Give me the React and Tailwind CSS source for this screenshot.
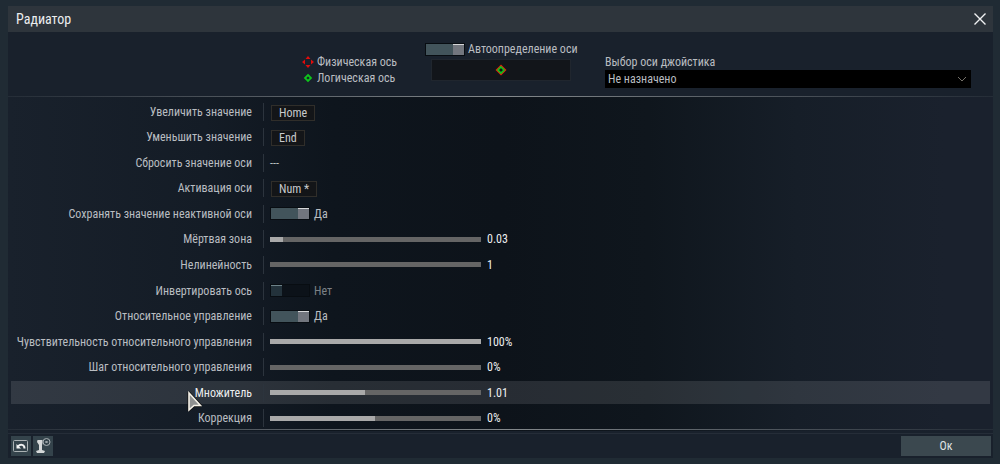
import React, { useState } from 'react';

const ROWS = [
  { id: 'inc', label: 'Увеличить значение', type: 'key', value: 'Home' },
  { id: 'dec', label: 'Уменьшить значение', type: 'key', value: 'End' },
  { id: 'reset', label: 'Сбросить значение оси', type: 'empty', value: '---' },
  { id: 'activate', label: 'Активация оси', type: 'key', value: 'Num *' },
  { id: 'keep', label: 'Сохранять значение неактивной оси', type: 'toggle', value: true },
  { id: 'dead', label: 'Мёртвая зона', type: 'slider', value: 6, text: '0.03' },
  { id: 'nonlin', label: 'Нелинейность', type: 'slider', value: 0, text: '1' },
  { id: 'invert', label: 'Инвертировать ось', type: 'toggle', value: false },
  { id: 'relative', label: 'Относительное управление', type: 'toggle', value: true },
  { id: 'sens', label: 'Чувствительность относительного управления', type: 'slider', value: 100, text: '100%' },
  { id: 'step', label: 'Шаг относительного управления', type: 'slider', value: 0, text: '0%' },
  { id: 'mult', label: 'Множитель', type: 'slider', value: 45, text: '1.01', active: true },
  { id: 'corr', label: 'Коррекция', type: 'slider', value: 50, text: '0%' },
];

function Toggle({ id, checked, onChange }) {
  return (
    <input
      id={id}
      type="checkbox"
      checked={checked}
      onChange={onChange}
      className="flex h-[13px] w-10 shrink-0 appearance-none border border-[#080d12] bg-[#0c1219] before:block before:h-full before:w-[11px] before:border-t before:border-[#6d8289] before:bg-[#23323b] before:content-[''] checked:justify-end checked:bg-[#42545b] checked:before:border-[#d5d7d9] checked:before:bg-[#72767e]"
    />
  );
}

function Slider({ id, value, onChange }) {
  return (
    <input
      id={id}
      type="range"
      min="0"
      max="100"
      value={value}
      onChange={onChange}
      className="h-[5px] w-[211px] shrink-0 appearance-none [&::-webkit-slider-thumb]:h-0 [&::-webkit-slider-thumb]:w-0 [&::-webkit-slider-thumb]:appearance-none"
      style={{ background: `linear-gradient(to right, #a9a9a9 ${value}%, #656565 ${value}%)` }}
    />
  );
}

function PhysicalMark() {
  return (
    <svg className="size-3" viewBox="0 0 12 12" fill="#e00c0c" aria-hidden="true">
      <path d="M6 0 8.5 3h-5zM6 12 3.5 9h5zM0 6 3 3.5v5zM12 6 9 8.5v-5z" />
    </svg>
  );
}

function LogicalMark() {
  return (
    <svg className="size-3" viewBox="0 0 12 12" fill="none" stroke="#0ec41c" strokeWidth="1.8" aria-hidden="true">
      <path d="M6 3 9 6 6 9 3 6z" />
    </svg>
  );
}

function Pointer() {
  return (
    <svg className="absolute -left-2 top-1.5 z-10 h-[21px] w-[15px]" viewBox="0 0 15 21" aria-hidden="true">
      <path d="M2 2v17l5-4.500 6.500 0z" fill="#111" stroke="#111" strokeWidth="3" strokeLinejoin="round" />
      <path d="M2 2v17l5-4.500 6.500 0z" fill="#8f9191" stroke="#f4f1e8" strokeWidth="1.600" />
    </svg>
  );
}

function Row({ row }) {
  const [value, setValue] = useState(row.value);

  return (
    <div className="flex items-center">
      <div className={`flex h-[23px] flex-1 items-center ${row.active ? 'bg-[#ffffff1c]' : ''}`}>
        <div className="flex w-[241px] shrink-0 justify-end whitespace-nowrap">
          <label htmlFor={row.id} className={`relative ${row.active ? 'text-[#eceeef]' : ''}`}>
            {row.label}
            {row.active && <Pointer />}
          </label>
        </div>
        <div className="ml-[11px] mr-1.5 h-[18px] w-px bg-[#2c343d]" />

        {row.type === 'key' && (
          <button id={row.id} className="ml-px mt-0.5 h-4 border border-[#302e2a] bg-[#131518] px-[7px] leading-[14px] text-[#c8cacc]">
            {row.value}
          </button>
        )}
        {row.type === 'empty' && <button id={row.id}>{row.value}</button>}
        {row.type === 'toggle' && (
          <>
            <Toggle id={row.id} checked={value} onChange={(e) => setValue(e.target.checked)} />
            <span className={`ml-1 ${value ? '' : 'text-[#7c8186]'}`}>{value ? 'Да' : 'Нет'}</span>
          </>
        )}
        {row.type === 'slider' && (
          <>
            <Slider id={row.id} value={value} onChange={(e) => setValue(Number(e.target.value))} />
            <span className="ml-1.5 text-[#eceeef]">{row.text}</span>
          </>
        )}
      </div>
    </div>
  );
}

export default function App() {
  const [auto, setAuto] = useState(true);

  return (
    <div className="flex min-h-screen flex-col bg-[#202b34] py-1.5 pl-2 pr-[7px] font-['Roboto_Condensed','Open_Sans_Condensed_Light',sans-serif] text-[12px] leading-4 text-[#b9bdc1]">
      <main className="flex flex-1 flex-col bg-[#19212c]">
        <header className="flex h-[26px] items-center justify-between bg-[#2e353c] px-2">
          <h1 className="text-[14px] text-[#eceeef]">Радиатор</h1>
          <button aria-label="Закрыть" className="-mr-[3px]">
            <svg className="size-4" viewBox="0 0 16 16" fill="none" stroke="#f0f2f3" strokeWidth="1.4">
              <path d="M2.500 2.500 13.500 13.500M13.500 2.500 2.500 13.500" />
            </svg>
          </button>
        </header>

        <section className="grid h-16 grid-cols-[1fr_152px_366px] gap-x-7 pr-[22px]">
          <ul className="justify-self-end pt-[22px]">
            <li className="flex items-center gap-[3px]"><PhysicalMark />Физическая ось</li>
            <li className="flex items-center gap-[3px]"><LogicalMark />Логическая ось</li>
          </ul>
          <div className="pt-[9px]">
            <div className="flex items-center gap-[3px] whitespace-nowrap">
              <Toggle id="auto" checked={auto} onChange={(e) => setAuto(e.target.checked)} />
              <label htmlFor="auto">Автоопределение оси</label>
            </div>
            <div className="mx-1.5 mt-0.5 flex h-[22px] items-center justify-center border border-[#20262e] bg-[#12151a]">
              <svg className="size-3" viewBox="0 0 12 12" aria-hidden="true">
                <path d="M6 0.500 11.500 6 6 11.500 0.500 6z" fill="#e0240c" />
                <path d="M6 3 9 6 6 9 3 6z" fill="#12151a" stroke="#0ec41c" strokeWidth="1.600" />
              </svg>
            </div>
          </div>
          <div className="flex flex-col pt-[22px]">
            <label htmlFor="axis">Выбор оси джойстика</label>
            <div className="grid items-center">
              <select id="axis" className="col-start-1 row-start-1 h-[18px] appearance-none bg-black px-[3px] text-[#b9bdc1]">
                <option>Не назначено</option>
              </select>
              <svg className="pointer-events-none col-start-1 row-start-1 mr-1 size-2.5 justify-self-end" viewBox="0 0 10 10" fill="none" stroke="#74716a">
                <path d="M1 3 5 7 9 3" />
              </svg>
            </div>
          </div>
        </section>

        <div className="h-px bg-linear-to-r from-[#252d37] via-[#858a8d] to-[#252d37]" />

        <section className="grid flex-1 auto-rows-fr bg-[linear-gradient(to_right,#19212c,#141c26_20%,#0e151d_33%,#0d131a_50%,#0f161d_65%,#161e28_80%,#1a212d_95%)] px-[3px] pt-0.5">
          {ROWS.map((row) => (
            <Row key={row.id} row={row} />
          ))}
        </section>
        <div className="-mt-0.5 h-px bg-linear-to-r from-[#252d37] via-[#858a8d] to-[#252d37]" />

        <footer className="mt-[3px] flex items-start justify-between border-t border-[#252d38] pb-0.5 pl-[3px] pr-0.5 pt-0.5">
          <div className="flex gap-0.5">
            <button aria-label="Сбросить" className="size-5 bg-[#34434b]">
              <svg className="size-5" viewBox="0 0 20 20" fill="none" aria-hidden="true">
                <rect x="2.500" y="4.500" width="14" height="11" rx="1" stroke="#abb2b4" />
                <path d="M7 10.500C9 8 13.500 8 13.500 12.500" stroke="#f2f3f3" strokeWidth="2" />
                <path d="M5.500 8v4.500h4.500z" fill="#f2f3f3" />
              </svg>
            </button>
            <button aria-label="Джойстик" className="size-5 bg-[#34434b]">
              <svg className="size-5" viewBox="0 0 20 20" fill="none" aria-hidden="true">
                <path d="M4.500 4h5v3L9 9v5l3 1-1 2H4l-1-2 3-1V9L4 6z" fill="#d5d8d9" />
                <circle cx="13.500" cy="6" r="3.500" stroke="#a9b1b4" />
                <path d="M12.500 5l2 2M14.500 5l-2 2" stroke="#bdc3c5" />
              </svg>
            </button>
          </div>
          <button className="h-5 w-[90px] bg-[#3b484f] text-[#dfe2e3]">Ок</button>
        </footer>
      </main>
    </div>
  );
}
